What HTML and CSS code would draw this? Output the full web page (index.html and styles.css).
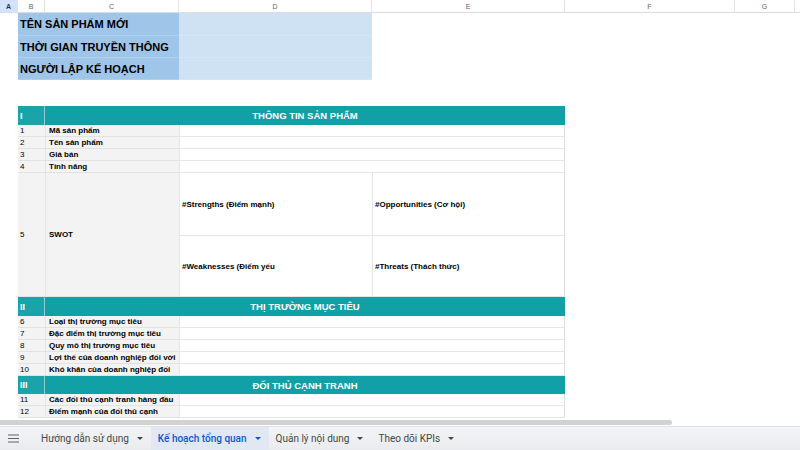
FILE: index.html
```html
<!DOCTYPE html>
<html lang="vi">
<head>
<meta charset="utf-8">
<link rel="stylesheet" href="styles.css">
</head>
<body>
<div class="app">
  <div class="sheet">
    <div class="colhdr sel">A</div>
    <div class="colhdr">B</div>
    <div class="colhdr">C</div>
    <div class="colhdr">D</div>
    <div class="colhdr">E</div>
    <div class="colhdr">F</div>
    <div class="colhdr">G</div>
    <div class="colhdr last"></div>

    <div class="blank"></div>
    <div class="meta-k">TÊN SẢN PHẨM MỚI</div>
    <div class="meta-v"></div>
    <div class="blank w4"></div>

    <div class="blank"></div>
    <div class="meta-k">THỜI GIAN TRUYỀN THÔNG</div>
    <div class="meta-v"></div>
    <div class="blank w4"></div>

    <div class="blank"></div>
    <div class="meta-k">NGƯỜI LẬP KẾ HOẠCH</div>
    <div class="meta-v"></div>
    <div class="blank w4"></div>

    <div class="blank full"></div>

    <div class="blank"></div>
    <div class="sec-no">I</div>
    <div class="sec-title">THÔNG TIN SẢN PHẨM</div>
    <div class="blank w3"></div>

    <div class="blank"></div><div class="no">1</div><div class="lbl">Mã sản phẩm</div><div class="val"></div><div class="blank w3"></div>
    <div class="blank"></div><div class="no">2</div><div class="lbl">Tên sản phẩm</div><div class="val"></div><div class="blank w3"></div>
    <div class="blank"></div><div class="no">3</div><div class="lbl">Giá bán</div><div class="val"></div><div class="blank w3"></div>
    <div class="blank"></div><div class="no">4</div><div class="lbl">Tính năng</div><div class="val"></div><div class="blank w3"></div>

    <div class="blank swot-r"></div>
    <div class="no swot-r mid">5</div>
    <div class="lbl swot-r mid">SWOT</div>
    <div class="swot">#Strengths (Điểm mạnh)</div>
    <div class="swot sr">#Opportunities (Cơ hội)</div>
    <div class="blank w3 swot-r"></div>
    <div class="swot">#Weaknesses (Điểm yếu</div>
    <div class="swot sr">#Threats (Thách thức)</div>

    <div class="blank"></div>
    <div class="sec-no">II</div>
    <div class="sec-title">THỊ TRƯỜNG MỤC TIÊU</div>
    <div class="blank w3"></div>

    <div class="blank"></div><div class="no">6</div><div class="lbl">Loại thị trường mục tiêu</div><div class="val"></div><div class="blank w3"></div>
    <div class="blank"></div><div class="no">7</div><div class="lbl">Đặc điểm thị trường mục tiêu</div><div class="val"></div><div class="blank w3"></div>
    <div class="blank"></div><div class="no">8</div><div class="lbl">Quy mô thị trường mục tiêu</div><div class="val"></div><div class="blank w3"></div>
    <div class="blank"></div><div class="no">9</div><div class="lbl">Lợi thế của doanh nghiệp đối với thị trường mục tiêu</div><div class="val"></div><div class="blank w3"></div>
    <div class="blank"></div><div class="no">10</div><div class="lbl">Khó khăn của doanh nghiệp đối với thị trường mục tiêu</div><div class="val"></div><div class="blank w3"></div>

    <div class="blank"></div>
    <div class="sec-no">III</div>
    <div class="sec-title">ĐỐI THỦ CẠNH TRANH</div>
    <div class="blank w3"></div>

    <div class="blank"></div><div class="no">11</div><div class="lbl">Các đối thủ cạnh tranh hàng đầu</div><div class="val"></div><div class="blank w3"></div>
    <div class="blank"></div><div class="no">12</div><div class="lbl">Điểm mạnh của đối thủ cạnh tranh so với doanh nghiệp</div><div class="val"></div><div class="blank w3"></div>
  </div>

  <div class="hscroll"><div class="thumb"></div></div>

  <div class="tabbar">
    <div class="menu">
      <svg width="11" height="9" viewBox="0 0 11 9"><path d="M0 1h11M0 4.5h11M0 8h11" stroke="#5f6368" stroke-width="1.1"/></svg>
    </div>
    <div class="tab">Hướng dẫn sử dụng<span class="caret"></span></div>
    <div class="tab active">Kế hoạch tổng quan<span class="caret"></span></div>
    <div class="tab">Quản lý nội dung<span class="caret"></span></div>
    <div class="tab">Theo dõi KPIs<span class="caret"></span></div>
  </div>
</div>
</body>
</html>
```

FILE: styles.css
```css
* { box-sizing: border-box; }
html, body { margin: 0; padding: 0; }
body {
  width: 800px;
  height: 450px;
  overflow: hidden;
  background: #fff;
  font-family: "Liberation Sans", Arial, sans-serif;
  color: #000;
}
.app {
  display: flex;
  flex-direction: column;
  height: 450px;
}
.sheet {
  display: grid;
  grid-template-columns: 18px 27px 134px 193px 193px 170px 60px 5px;
  grid-template-rows: 13px 23px 22px 22px 26px 19px 12px 12px 12px 12px 63px 61px 19px 12px 12px 12px 12px 12px 18px 12px 12px;
  height: 418px;
  overflow: hidden;
}
.colhdr {
  font-size: 7px;
  color: #5f6368;
  display: flex;
  align-items: center;
  justify-content: center;
  border-right: 1px solid #e3e3e3;
  border-bottom: 1px solid #dadce0;
  background: #fff;
}
.colhdr.sel { background: #d3e3fd; color: #1f3760; font-weight: bold; }
.colhdr.last { border-right: none; }
.blank { background: #fff; }
.blank.w3 { grid-column: span 3; }
.blank.w4 { grid-column: span 4; }
.blank.full { grid-column: 1 / -1; }
.meta-k {
  grid-column: span 2;
  background: #9fc5e8;
  font-weight: bold;
  font-size: 11px;
  white-space: nowrap;
  overflow: hidden;
  display: flex;
  align-items: center;
  padding-left: 2px;
  border-bottom: 1px solid #acd0ee;
}
.meta-v {
  background: #cfe2f3;
  border-bottom: 1px solid #d6e6f5;
}
.sec-no {
  background: #1aa3a9;
  color: #fff;
  font-weight: bold;
  font-size: 9px;
  display: flex;
  align-items: center;
  padding-left: 2px;
  border-right: 1px solid #8fd0d3;
}
.sec-title {
  grid-column: span 3;
  background: #11a0a6;
  color: #fff;
  font-weight: bold;
  font-size: 9.5px;
  display: flex;
  align-items: center;
  justify-content: center;
}
.no {
  background: #f3f3f3;
  font-size: 8px;
  padding: 1px 0 0 2px;
  line-height: 10px;
  border-bottom: 1px solid #e2e2e2;
  overflow: hidden;
}
.lbl {
  background: #f3f3f3;
  font-size: 8px;
  font-weight: bold;
  padding: 1px 0 0 3px;
  line-height: 10px;
  overflow: hidden;
  border-bottom: 1px solid #e2e2e2;
  border-left: 1px solid #e6e6e6;
}
.val {
  grid-column: span 2;
  border-bottom: 1px solid #e6e6e6;
  border-left: 1px solid #e6e6e6;
  border-right: 1px solid #dcdcdc;
}
.swot-r { grid-row: span 2; }
.mid { display: flex; align-items: center; padding-top: 0; }
.swot {
  font-size: 8px;
  font-weight: bold;
  display: flex;
  align-items: center;
  padding-left: 2px;
  border-left: 1px solid #e6e6e6;
  border-bottom: 1px solid #e6e6e6;
}
.swot.sr { border-right: 1px solid #dcdcdc; }
.hscroll {
  height: 9px;
  padding-top: 2px;
  background: #fff;
  border-bottom: 1px solid #e0e0e0;
}
.thumb {
  width: 672px;
  height: 5px;
  background: #d2d2d2;
  border-radius: 0 3px 3px 0;
}
.tabbar {
  flex: 1;
  display: flex;
  align-items: stretch;
  background: linear-gradient(#f3f4f6, #e9ebee);
  font-family: Roboto, "Liberation Sans", sans-serif;
  font-size: 10px;
  color: #444746;
}
.menu {
  width: 34px;
  display: flex;
  align-items: center;
  padding-left: 8px;
}
.tab {
  display: flex;
  align-items: center;
  padding: 0 8px 0 7px;
  white-space: nowrap;
}
.tab.active {
  background: #e1e8f3;
  color: #0b57d0;
  font-weight: 500;
}
.caret {
  display: inline-block;
  width: 0;
  height: 0;
  margin-left: 8px;
  border-left: 3px solid transparent;
  border-right: 3px solid transparent;
  border-top: 3px solid currentColor;
}
```
